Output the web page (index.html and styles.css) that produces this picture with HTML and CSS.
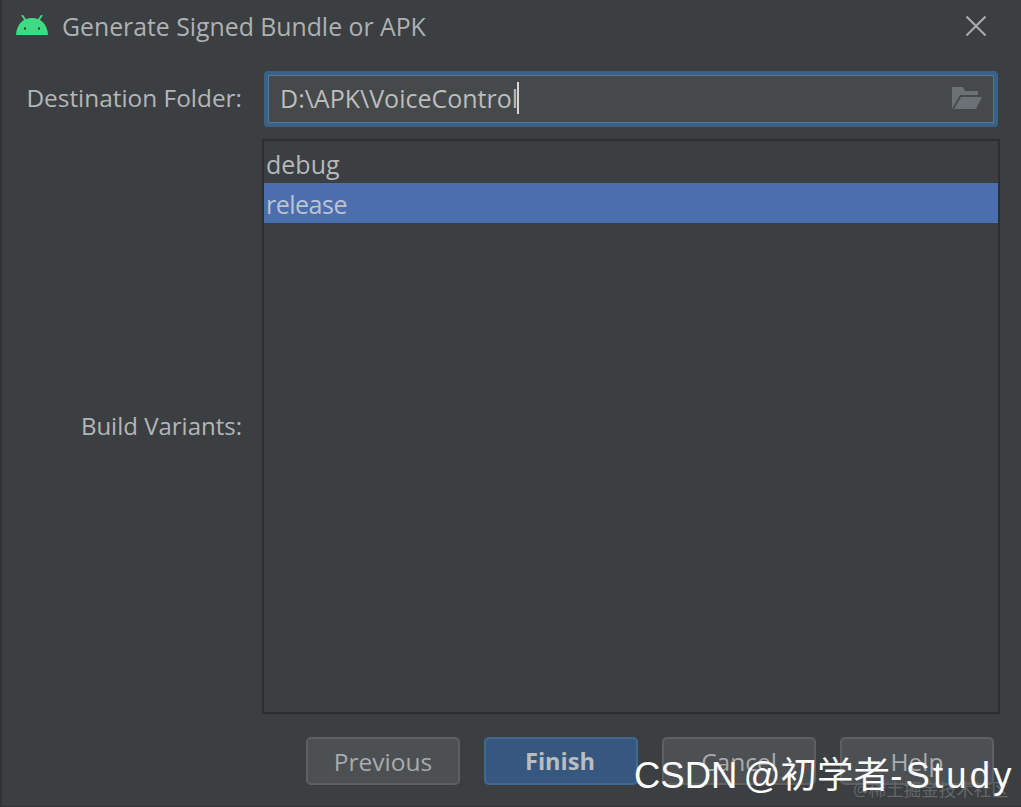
FILE: index.html
```html
<!DOCTYPE html>
<html lang="en">
<head>
<meta charset="utf-8">
<title>Generate Signed Bundle or APK</title>
<link rel="stylesheet" href="styles.css">
</head>
<body>
<div class="dialog">
  <header class="titlebar">
    <svg class="android" viewBox="0 0 32 20" width="32" height="20">
      <path d="M0 20 C0.5 9.5 7 3 16 3 C25 3 31.500 9.500 32 20 Z" fill="#3ddc84"/>
      <path d="M10 6 L6 0 M22 6 L26 0" stroke="#3ddc84" stroke-width="1.800" fill="none"/>
      <rect x="8" y="12.500" width="2" height="2" fill="#2b3a33"/>
      <rect x="22" y="12.500" width="2" height="2" fill="#2b3a33"/>
    </svg>
    <span class="title">Generate Signed Bundle or APK</span>
    <svg class="close" viewBox="0 0 20 20" width="20" height="20">
      <path d="M0.500 0.500 L19.500 19.500 M19.500 0.500 L0.500 19.500" stroke="#a9abad" stroke-width="2" fill="none"/>
    </svg>
  </header>
  <main class="form">
    <label class="label label-folder">Destination Folder:</label>
    <div class="field">
      <span class="value">D:\APK\VoiceControl</span><span class="caret"></span>
      <svg class="folder" viewBox="0 0 30 22" width="30" height="22">
        <path d="M0 0 H11 L13 4 H26 V8 H8 L0 22 Z" fill="#6b7174"/>
        <path d="M9 10 H30 L24 22 H2 Z" fill="#6b7174"/>
      </svg>
    </div>
    <label class="label">Build Variants:</label>
    <div class="list">
      <div class="item">debug</div>
      <div class="item item-selected">release</div>
    </div>
  </main>
  <footer class="buttons">
    <button class="btn">Previous</button>
    <button class="btn btn-primary">Finish</button>
    <button class="btn">Cancel</button>
    <button class="btn">Help</button>
  </footer>
  <span class="mark-faint">@稀土掘金技术社区</span>
  <span class="mark">CSDN @初学者<span class="mark-tail">-Study</span></span>
</div>
</body>
</html>
```
FILE: styles.css
```css
* { box-sizing: border-box; }
html, body { margin: 0; padding: 0; }
body { width: 1021px; height: 807px; overflow: hidden; background: #3c3f41; }
.dialog {
  position: relative;
  width: 1021px;
  height: 807px;
  display: flex;
  flex-direction: column;
  background: #3c3f41;
  border-left: 2px solid #323232;
  border-bottom: 1px solid #2f3132;
  color: #b3b6b8;
  font-family: "Open Sans", "Noto Sans", "Noto Sans CJK SC", sans-serif;
  font-size: 25px;
}
.titlebar {
  height: 52px;
  flex: none;
  display: flex;
  align-items: center;
  padding: 0 35px 0 14px;
}
.android { flex: none; margin-top: -2px; }
.title { margin-left: 14px; flex: 1; font-size: 24.8px; line-height: 52px; color: #aeb1b3; white-space: nowrap; }
.close { flex: none; }
.form {
  flex: 1;
  min-height: 0;
  display: grid;
  grid-template-columns: 240px 1fr;
  grid-template-rows: 56px 1fr;
  column-gap: 20px;
  row-gap: 12px;
  padding: 19px 21px 22px 0;
}
.label { display: flex; align-items: center; justify-content: flex-end; white-space: nowrap; font-size: 24px; padding-bottom: 2px; }
.label-folder { font-size: 24.4px; padding-bottom: 4px; }
.field {
  margin: 0 2px 0 2px;
  display: flex;
  align-items: center;
  background: #45494a;
  border: 4px solid #3d6185;
  border-radius: 4px;
  box-shadow: inset 0 0 0 1px #4a7aa5;
  padding: 0 12px 2px 12px;
  font-size: 25px;
  color: #bbbdbf;
}
.value { white-space: nowrap; }
.caret { width: 2px; height: 32px; background: #d4d6d8; margin-left: -1px; }
.folder { margin-left: auto; }
.list {
  border: 2px solid #2e2e2e;
  padding-top: 3px;
  background: #3c3f41;
  font-size: 25px;
  min-height: 0;
}
.item { height: 39px; line-height: 40px; padding-left: 2px; color: #b5b8ba; }
.item-selected { height: 40px; line-height: 42px; background: #4b6eaf; color: #bcc3cf; letter-spacing: -0.5px; }
.buttons {
  flex: none;
  height: 70px;
  display: flex;
  justify-content: flex-end;
  gap: 24px;
  padding: 1px 27px 21px 0;
}
.btn {
  width: 154px;
  height: 48px;
  border: 2px solid #5e6060;
  border-radius: 5px;
  background: #4c5052;
  color: #a8abad;
  font-family: inherit;
  font-size: 24.5px;
  padding: 0;
}
.btn-primary { background: #365880; border-color: #43688f; color: #bbbcbd; font-weight: 700; font-size: 23.6px; padding-right: 2px; }
.mark-faint {
  position: absolute;
  left: 851px;
  top: 776px;
  font-size: 17.500px;
  line-height: 26px;
  color: #63676a;
  white-space: nowrap;
}
.mark {
  position: absolute;
  left: 632px;
  top: 754px;
  font-family: "Liberation Sans", "Noto Sans CJK SC", sans-serif;
  font-size: 36.500px;
  line-height: 44px;
  color: #ffffff;
  white-space: nowrap;
  word-spacing: -4px;
}
.mark-tail { letter-spacing: 3.200px; }
```
